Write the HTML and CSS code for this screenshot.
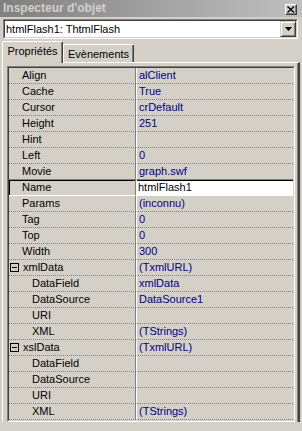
FILE: index.html
```html
<!DOCTYPE html>
<html>
<head>
<meta charset="utf-8">
<link rel="stylesheet" href="styles.css">
</head>
<body>
<div class="title">
  <span class="title-text">Inspecteur d'objet</span>
  <span class="close-btn"><svg width="8" height="7" viewBox="0 0 8 7"><path d="M0.5 0.5L7 6.5M7 0.5L0.5 6.5" stroke="#000" stroke-width="1.4" fill="none"/></svg></span>
</div>
<div class="combo">
  <div class="combo-inner">
    <span class="combo-text">htmlFlash1: ThtmlFlash</span>
    <span class="combo-btn"><svg width="7" height="4" viewBox="0 0 7 4"><path d="M0 0h7L3.5 4z" fill="#000"/></svg></span>
  </div>
</div>
<div class="tabs">
  <div class="tab active">Propriétés</div>
  <div class="tab other">Evènements</div>
</div>
<div class="panel">
  <div class="grid">
    <div class="grid-inner">
      <div class="row"><span class="name">Align</span><span class="val">alClient</span></div>
      <div class="row"><span class="name">Cache</span><span class="val">True</span></div>
      <div class="row"><span class="name">Cursor</span><span class="val">crDefault</span></div>
      <div class="row"><span class="name">Height</span><span class="val">251</span></div>
      <div class="row"><span class="name">Hint</span><span class="val"></span></div>
      <div class="row"><span class="name">Left</span><span class="val">0</span></div>
      <div class="row pre-sel"><span class="name">Movie</span><span class="val">graph.swf</span></div>
      <div class="row sel"><span class="name">Name</span><span class="val">htmlFlash1</span></div>
      <div class="row"><span class="name">Params</span><span class="val">(inconnu)</span></div>
      <div class="row"><span class="name">Tag</span><span class="val">0</span></div>
      <div class="row"><span class="name">Top</span><span class="val">0</span></div>
      <div class="row"><span class="name">Width</span><span class="val">300</span></div>
      <div class="row"><span class="name group"><svg class="exp" width="9" height="9" viewBox="0 0 9 9"><rect x="0.5" y="0.5" width="8" height="8" fill="none" stroke="#000"/><path d="M2 4.5h5" stroke="#000"/></svg>xmlData</span><span class="val">(TxmlURL)</span></div>
      <div class="row"><span class="name sub">DataField</span><span class="val">xmlData</span></div>
      <div class="row"><span class="name sub">DataSource</span><span class="val">DataSource1</span></div>
      <div class="row"><span class="name sub">URI</span><span class="val"></span></div>
      <div class="row"><span class="name sub">XML</span><span class="val">(TStrings)</span></div>
      <div class="row"><span class="name group"><svg class="exp" width="9" height="9" viewBox="0 0 9 9"><rect x="0.5" y="0.5" width="8" height="8" fill="none" stroke="#000"/><path d="M2 4.5h5" stroke="#000"/></svg>xslData</span><span class="val">(TxmlURL)</span></div>
      <div class="row"><span class="name sub">DataField</span><span class="val"></span></div>
      <div class="row"><span class="name sub">DataSource</span><span class="val"></span></div>
      <div class="row"><span class="name sub">URI</span><span class="val"></span></div>
      <div class="row"><span class="name sub">XML</span><span class="val">(TStrings)</span></div>
    </div>
  </div>
</div>
</body>
</html>
```
FILE: styles.css
```css
* { box-sizing: border-box; }
html, body { margin: 0; padding: 0; }
body {
  background: #d4d0c8;
  font-family: "Liberation Sans", Arial, sans-serif;
  font-size: 11px;
  color: #000;
  width: 302px;
  height: 431px;
  overflow: hidden;
}
.title {
  height: 17px;
  display: flex;
  align-items: center;
  justify-content: space-between;
  background: linear-gradient(to right, #808080, #c0c0c0);
  padding: 0 5px 0 3px;
}
.title-text {
  font-weight: bold;
  font-size: 12px;
  color: #d4d0c8;
  line-height: 17px;
}
.close-btn {
  width: 12px;
  height: 11px;
  margin-top: 2px;
  background: #d4d0c8;
  border-style: solid;
  border-width: 1px;
  border-color: #fff #404040 #404040 #fff;
  box-shadow: inset -1px -1px #808080;
  display: flex;
  align-items: center;
  justify-content: center;
}
.combo {
  margin: 2px 4px 0 3px;
  height: 20px;
  background: #fff;
  border-style: solid;
  border-width: 1px;
  border-color: #808080 #fff #fff #808080;
}
.combo-inner {
  height: 100%;
  border-style: solid;
  border-width: 1px;
  border-color: #404040 #d4d0c8 #d4d0c8 #404040;
  display: flex;
  align-items: center;
}
.combo-text { flex: 1; padding-left: 1px; line-height: 16px; }
.combo-btn {
  width: 16px;
  height: 16px;
  background: #d4d0c8;
  border-style: solid;
  border-width: 1px;
  border-color: #d4d0c8 #404040 #404040 #d4d0c8;
  box-shadow: inset 1px 1px #fff, inset -1px -1px #808080;
  display: flex;
  align-items: center;
  justify-content: center;
}
.tabs {
  display: flex;
  align-items: flex-end;
  height: 21px;
  margin-top: 2px;
  padding-left: 2px;
  position: relative;
  z-index: 1;
}
.tab {
  border-style: solid;
  border-width: 1px 1px 0 1px;
  border-color: #fff #404040 #fff #fff;
  border-radius: 2px 2px 0 0;
  box-shadow: inset -1px 0 #808080;
  background: #d4d0c8;
  display: flex;
  align-items: center;
  justify-content: center;
}
.tab.active {
  width: 61px;
  height: 22px;
  margin-bottom: -1px;
  padding-bottom: 3px;
}
.tab.other {
  width: 71px;
  height: 18px;
  padding-top: 1px;
}
.panel {
  margin-left: 2px;
  width: 298px;
  height: 360px;
  border-style: solid;
  border-width: 1px 2px 0 1px;
  border-color: #fff #404040 #d4d0c8 #fff;
  box-shadow: inset -1px 0 #808080;
  padding: 3px 3px 0 4px;
}
.grid {
  width: 288px;
  border-style: solid;
  border-width: 1px;
  border-color: #808080 #fff #fff #808080;
}
.grid-inner {
  border-style: solid;
  border-width: 1px;
  border-color: #404040 #d4d0c8 #d4d0c8 #404040;
}
.row {
  display: grid;
  grid-template-columns: 127px 1fr;
  height: 16px;
}
.name, .val {
  display: flex;
  align-items: center;
  height: 16px;
  line-height: 15px;
  border-bottom: 1px dotted #808080;
  white-space: nowrap;
}
.name {
  padding-left: 13px;
  border-right: 1px solid #808080;
}
.name.sub { padding-left: 23px; }
.name.group { padding-left: 1px; }
.exp { margin-right: 4px; flex: none; }
.val {
  padding-left: 2px;
  border-left: 1px solid #fff;
  color: #000080;
}
.row.pre-sel .name, .row.pre-sel .val { border-bottom: 1px solid #808080; }
.row.sel .name {
  border-bottom: 1px solid #fff;
  box-shadow: inset 1px 1px #000;
}
.row.sel .val {
  background: #fff;
  color: #000;
  padding-left: 1px;
  border-bottom: 1px solid #fff;
  box-shadow: inset 0 1px #000;
}
```
